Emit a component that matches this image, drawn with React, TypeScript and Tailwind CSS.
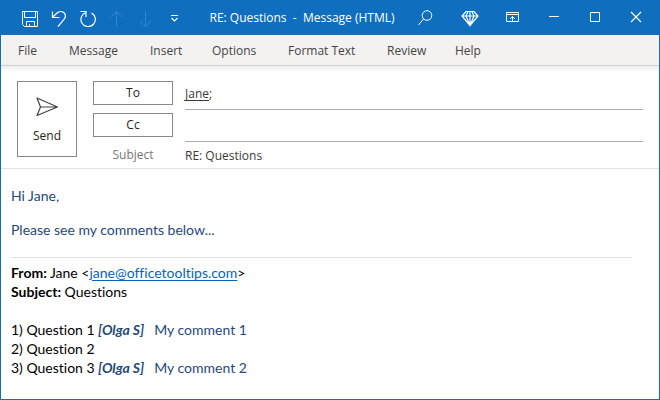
import React from "react";

const menuItems = [
  { label: "File", width: "w-[51px]" },
  { label: "Message", width: "w-[81px]" },
  { label: "Insert", width: "w-[62px]" },
  { label: "Options", width: "w-[76px]" },
  { label: "Format Text", width: "w-[99px]" },
  { label: "Review", width: "w-[68px]" },
  { label: "Help", width: "w-[58px]" },
];

const questions = [
  { text: "1) Question 1", comment: "My comment 1" },
  { text: "2) Question 2", comment: null },
  { text: "3) Question 3", comment: "My comment 2" },
];

function Icon({ children }: { children: React.ReactNode }) {
  return (
    <svg width="19" height="19" viewBox="0 0 19 19" fill="none" stroke="currentColor" className="shrink-0" aria-hidden="true">
      {children}
    </svg>
  );
}

function BarButton({ label, children, className = "w-[29px]" }: { label: string; children: React.ReactNode; className?: string }) {
  return (
    <button type="button" aria-label={label} className={`flex h-full shrink-0 items-center justify-center ${className}`}>
      <Icon>{children}</Icon>
    </button>
  );
}

function TitleBar() {
  return (
    <header className="flex h-[35px] items-center justify-between bg-[#106ebe] text-white">
      <div className="flex h-full w-[202px] shrink-0 items-center pl-[14px]">
        <BarButton label="Save">
          <path d="M3.500 3.500h15v15h-13l-2-2zM5.500 3.500v6h11v-6M7.500 18.500v-5h8v5M10.500 16v2.500" />
        </BarButton>
        <BarButton label="Undo">
          <path d="M4.500 3.500v6h7M4.500 9.500L9 5c2-1.900 5-2 7-.2 1.900 1.800 1.900 4.700 0 6.500L10 18.500" strokeWidth="1.200" />
        </BarButton>
        <BarButton label="Redo">
          <path d="M3.500 3.500h5.500v5.500M9 4.500A7.200 7.200 0 1 0 14.500 5" strokeWidth="1.200" />
        </BarButton>
        <BarButton label="Previous item" className="w-[29px] text-[#3385d0]">
          <path d="M10.500 18.500V3.500M5 9l5.500-5.500L16 9" />
        </BarButton>
        <BarButton label="Next item" className="w-[29px] text-[#3385d0]">
          <path d="M10.500 3v15.500M5 13l5.500 5.500L16 13" />
        </BarButton>
        <BarButton label="Customize quick access toolbar">
          <path d="M7 7.500h7M7.500 10l3 3 3-3" strokeWidth="1.200" />
        </BarButton>
      </div>
      <h1 className="whitespace-pre pt-px text-xs">RE: Questions  -  Message (HTML)</h1>
      <div className="flex h-full w-[258px] shrink-0 items-center">
        <BarButton label="Search" className="w-[45px]">
          <circle cx="12" cy="7.500" r="4.800" />
          <path d="M8.500 11L3.500 17" />
        </BarButton>
        <BarButton label="Premium features" className="w-[45px]">
          <path d="M6 3.500h8l4 4.500-8 9.500L2 8zM2 8h16M10 3.500v14M8 3.500L6 8l4 9.500L14 8l-2-4.500" strokeWidth="1.200" />
        </BarButton>
        <BarButton label="Ribbon display options" className="w-[41px]">
          <path d="M3.500 4.500h12v9h-12zM3.500 6.500h12M9.500 13V8.500M7 11l2.500-2.500L12 11" />
        </BarButton>
        <BarButton label="Minimize" className="w-[41px]">
          <path d="M5 8.500h10" />
        </BarButton>
        <BarButton label="Maximize" className="w-[41px]">
          <path d="M5.500 4.500h9v9h-9z" />
        </BarButton>
        <BarButton label="Close" className="w-[41px]">
          <path d="M5 4l10 10M15 4L5 14" strokeWidth="1.200" />
        </BarButton>
      </div>
    </header>
  );
}

function MessageHeader() {
  const fieldButton = "h-6 w-20 border border-[#8a8886] text-xs text-[#252423]";
  return (
    <form className="flex gap-4 border-b border-[#e1e1e1] bg-[linear-gradient(#ededed,#ffffff_6px)] px-4 pt-[15px] pb-[3px]">
      <button type="button" className="flex h-[76px] w-[60px] shrink-0 flex-col items-center border border-[#8a8886] pt-[14px] text-xs text-[#252423]">
        <svg width="24" height="22" viewBox="0 0 24 22" fill="none" stroke="#444" strokeWidth="1.200" strokeLinejoin="round" aria-hidden="true">
          <path d="M2 2l20.500 9L2 19.500l3.500-8.500zM5.500 11h17" />
        </svg>
        <span className="mt-2 leading-5">Send</span>
      </button>
      <div className="grid flex-1 grid-cols-[80px_1fr] gap-x-3 text-xs text-[#3b3a39]">
        <div className="h-8">
          <button type="button" className={fieldButton}>To</button>
        </div>
        <div className="flex h-[29px] items-center border-b border-[#adadad] pb-0.5">
          <span className="underline underline-offset-2">Jane</span>;
          <input aria-label="To" className="min-w-0 flex-1 outline-none" />
        </div>
        <div className="h-8">
          <button type="button" className={fieldButton}>Cc</button>
        </div>
        <input aria-label="Cc" className="h-[29px] min-w-0 border-b border-[#adadad] outline-none" />
        <label htmlFor="subject" className="text-center leading-5 text-[#797775]">Subject</label>
        <input id="subject" defaultValue="RE: Questions" className="h-5 min-w-0 outline-none" />
      </div>
    </form>
  );
}

export default function App() {
  return (
    <div className="flex min-h-screen flex-col bg-white font-['Open_Sans','Noto_Sans',sans-serif]">
      <TitleBar />
      <div className="flex flex-1 flex-col border-x border-b border-[#106ebe]">
        <nav className="flex h-[31px] items-center border-b border-[#d2d0ce] bg-[#f3f2f1] pt-0.5 pl-[17px] text-xs text-[#444]">
          {menuItems.map((item) => (
            <button key={item.label} type="button" className={`${item.width} shrink-0 text-left whitespace-nowrap`}>
              {item.label}
            </button>
          ))}
        </nav>
        <MessageHeader />
        <main className="px-[10px] pt-[17px] font-[Lato,sans-serif] text-sm leading-[19px] text-black [font-variant-ligatures:none]">
          <p className="mb-[15px] text-[#1f497d]">Hi Jane,</p>
          <p className="text-[#1f497d]">Please see my comments below...</p>
          <hr className="mt-[18px] mr-[17px] mb-[5px] border-[#e1e1e1]" />
          <p>
            <b>From:</b> Jane &lt;
            <a href="mailto:jane@officetooltips.com" className="text-[#0563c1] underline underline-offset-2">jane@officetooltips.com</a>&gt;
          </p>
          <p className="mb-[19px]">
            <b>Subject:</b> Questions
          </p>
          {questions.map((q) => (
            <p key={q.text} className="flex">
              <span className="w-[87px] whitespace-nowrap">{q.text}</span>
              {q.comment && (
                <span className="text-[#1f497d]">
                  <b className="mr-[10px] italic">[Olga S]</b>
                  {q.comment}
                </span>
              )}
            </p>
          ))}
        </main>
      </div>
    </div>
  );
}
